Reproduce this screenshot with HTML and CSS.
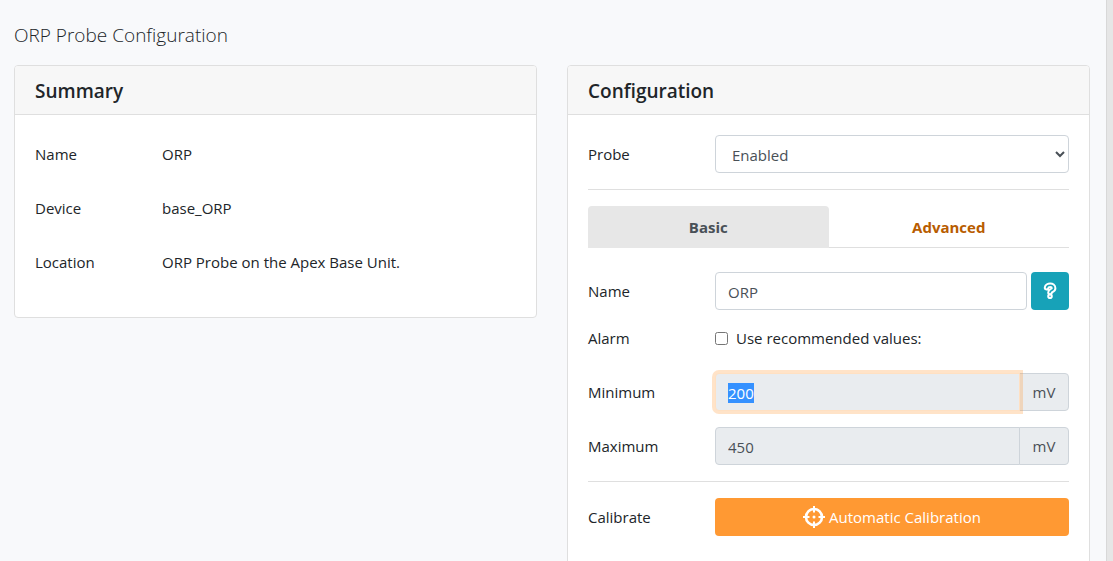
FILE: index.html
```
<!DOCTYPE html>
<html lang="en">
<head>
  <meta charset="UTF-8" />
  <meta name="viewport" content="width=device-width, initial-scale=1.0"/>
  <title>ORP Probe Configuration</title>
  <link rel="stylesheet" href="styles.css">
</head>
<body>
  <main>
    <h1>ORP Probe Configuration</h1>

    <div class="columns">
      <section class="card">
        <h2 class="card-header">Summary</h2>
        <dl class="card-body">
          <div class="row"><dt>Name</dt><dd>ORP</dd></div>
          <div class="row"><dt>Device</dt><dd>base_ORP</dd></div>
          <div class="row"><dt>Location</dt><dd>ORP Probe on the Apex Base Unit.</dd></div>
        </dl>
      </section>

      <section class="card">
        <h2 class="card-header">Configuration</h2>
        <form class="card-body">
          <div class="row">
            <label for="probe">Probe</label>
            <select id="probe" class="control">
              <option>Enabled</option>
              <option>Disabled</option>
            </select>
          </div>

          <hr>

          <nav class="tabs">
            <a class="tab active" href="#basic">Basic</a>
            <a class="tab" href="#advanced">Advanced</a>
          </nav>

          <div class="row">
            <label for="name">Name</label>
            <div class="group">
              <input type="text" id="name" class="control" value="ORP">
              <button type="button" class="btn help" aria-label="Help">
                <svg width="14" height="18" viewBox="0 0 14 18" fill="none" stroke-linecap="round" stroke-linejoin="round">
                  <path class="outline" d="M3.6 5.6C4 2.6 10.6 2.2 10.6 6.2C10.6 8.7 7 8.4 7 10.4M7 14.2V14.3"/>
                  <path class="core" d="M3.6 5.6C4 2.6 10.6 2.2 10.6 6.2C10.6 8.7 7 8.4 7 10.4M7 14.2V14.3"/>
                </svg>
              </button>
            </div>
          </div>

          <div class="row alarm">
            <span>Alarm</span>
            <label class="check" for="recommended">
              <input type="checkbox" id="recommended">
              Use recommended values:
            </label>
          </div>

          <div class="row">
            <label for="minimum">Minimum</label>
            <div class="group joined">
              <input type="text" id="minimum" class="control" value="200" readonly>
              <span class="unit">mV</span>
            </div>
          </div>

          <div class="row">
            <label for="maximum">Maximum</label>
            <div class="group joined">
              <input type="text" id="maximum" class="control" value="450" readonly>
              <span class="unit">mV</span>
            </div>
          </div>

          <hr>

          <div class="row">
            <span>Calibrate</span>
            <button type="button" class="btn calibrate">
              <svg width="22" height="22" viewBox="0 0 22 22" fill="none" stroke="currentColor" stroke-width="2.6">
                <circle cx="11" cy="11" r="8"/>
                <path d="M11 0V6.5M11 15.5V22M0 11H6.5M15.5 11H22" stroke-width="2"/>
                <circle cx="11" cy="11" r="1.5" fill="currentColor" stroke="none"/>
              </svg>
              Automatic Calibration
            </button>
          </div>
        </form>
      </section>
    </div>
  </main>
  <div class="gutter"></div>

  <script>
    const minimum = document.getElementById("minimum");
    minimum.focus();
    minimum.select();
  </script>
</body>
</html>
```
FILE: styles.css
```
:root {
  --bg: #f8f9fb;
  --text: #212529;
  --muted: #495057;
  --line: #dfdfdf;
  --border: #ced4da;
  --disabled: #e9ecef;
  --orange: #ff9933;
  --teal: #17a2b8;
}

* {
  box-sizing: border-box;
}

body {
  margin: 0;
  height: 100vh;
  overflow: hidden;
  display: flex;
  background: var(--bg);
  color: var(--text);
  font: 15px/24px "Segoe UI", "Open Sans", sans-serif;
}

main {
  flex: 1;
  padding: 23px 16px 0 14px;
}

.gutter {
  width: 7px;
  background: #e6e6e6;
  border-left: 1px solid #d8d8d8;
}

h1 {
  margin: 0 0 18px;
  font-size: 19px;
  line-height: 24px;
  font-weight: 300;
}

.columns {
  display: grid;
  grid-template-columns: 1fr 1fr;
  gap: 30px;
  align-items: start;
}

.card {
  background: #fff;
  border: 1px solid var(--line);
  border-radius: 4px;
}

.card-header {
  margin: 0;
  padding: 13px 20px 11px;
  background: #f7f7f7;
  border-bottom: 1px solid var(--line);
  border-radius: 3px 3px 0 0;
  font-size: 19px;
  line-height: 24px;
  font-weight: 600;
}

.card-body {
  margin: 0;
  padding: 20px;
}

.row {
  display: grid;
  grid-template-columns: 127px 1fr;
  align-items: center;
  min-height: 38px;
  margin-bottom: 16px;
}

dd {
  margin: 0;
}

hr {
  margin: 16px 0;
  border: 0;
  border-top: 1px solid var(--line);
}

.control {
  width: 100%;
  height: 38px;
  padding: 7px 12px 5px;
  background: #fff;
  border: 1px solid var(--border);
  border-radius: 4px;
  color: var(--muted);
  font: inherit;
}

.control:read-only:not(select) {
  background: var(--disabled);
}

.control:focus {
  outline: none;
  border-color: #ffe0c2;
  box-shadow: 0 0 0 3px rgba(255, 153, 51, 0.27);
  z-index: 1;
}

.control::selection {
  background: rgba(51, 144, 255, 0.99);
  color: #fff;
}

.tabs {
  display: flex;
  margin-bottom: 24px;
  border-bottom: 1px solid var(--line);
}

.tab {
  flex: 1;
  padding: 9px 16px 8px;
  border-radius: 4px 4px 0 0;
  color: #b85c00;
  font-weight: 700;
  text-align: center;
  text-decoration: none;
}

.tab.active {
  margin-bottom: -1px;
  padding-bottom: 9px;
  background: #e7e7e7;
  color: var(--muted);
}

.group {
  display: flex;
  gap: 4px;
}

.group .control {
  flex: 1;
  min-width: 0;
  position: relative;
}

.joined {
  gap: 0;
}

.joined .control {
  border-radius: 4px 0 0 4px;
}

.unit {
  width: 50px;
  margin-left: -1px;
  padding: 6px 0;
  background: var(--disabled);
  border: 1px solid var(--border);
  border-radius: 0 4px 4px 0;
  color: var(--muted);
  text-align: center;
}

.alarm {
  align-items: start;
  min-height: 31px;
}

.check {
  display: flex;
  align-items: center;
  gap: 8px;
}

.check input {
  margin: 0;
}

.btn {
  display: flex;
  align-items: center;
  justify-content: center;
  gap: 4px;
  height: 38px;
  border: 0;
  border-radius: 4px;
  color: #fff;
  font: inherit;
}

.help {
  width: 38px;
  background: var(--teal);
}

.help .outline {
  stroke: #fff;
  stroke-width: 5.6;
}

.help .core {
  stroke: var(--teal);
  stroke-width: 1.6;
}

.calibrate {
  background: var(--orange);
}
```
